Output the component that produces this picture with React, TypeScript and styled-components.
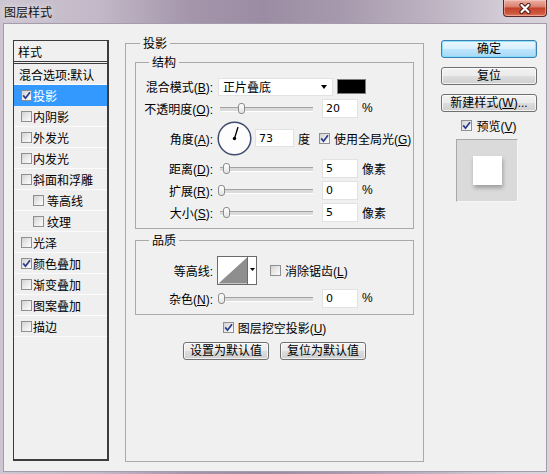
import React from 'react';
import styled, { createGlobalStyle } from 'styled-components';

const FONT = `"Liberation Sans", "Noto Sans CJK SC", sans-serif`;

const GlobalStyle = createGlobalStyle`
  html, body {
    margin: 0;
    padding: 0;
  }
  body {
    width: 550px;
    height: 474px;
    overflow: hidden;
    font-family: ${FONT};
    font-size: 12px;
    color: #000;
  }
  * {
    box-sizing: border-box;
  }
`;

type StyleItem = {
  label: string;
  plain?: boolean;
  checked?: boolean;
  selected?: boolean;
  indent?: boolean;
};

const styleItems: StyleItem[] = [
  { label: '混合选项:默认', plain: true },
  { label: '投影', checked: true, selected: true },
  { label: '内阴影' },
  { label: '外发光' },
  { label: '内发光' },
  { label: '斜面和浮雕' },
  { label: '等高线', indent: true },
  { label: '纹理', indent: true },
  { label: '光泽' },
  { label: '颜色叠加', checked: true },
  { label: '渐变叠加' },
  { label: '图案叠加' },
  { label: '描边' },
];

const Check = ({ checked }: { checked?: boolean }) => (
  <CheckBox>
    {checked && (
      <svg width="9" height="9" viewBox="0 0 9 9">
        <path d="M1.2 4.4 L3.5 7.2 L8 1.2" fill="none" stroke="#27398c" strokeWidth="1.7" />
      </svg>
    )}
  </CheckBox>
);

const Slider = ({ value }: { value: number }) => (
  <Track>
    <Thumb style={{ left: value }} />
  </Track>
);

const Dial = ({ angle }: { angle: number }) => {
  const rad = (angle * Math.PI) / 180;
  const x = 17.5 + 12 * Math.cos(rad);
  const y = 17.5 - 12 * Math.sin(rad);
  return (
    <DialWrap>
      <svg width="35" height="35" viewBox="0 0 35 35">
        <circle cx="17.5" cy="17.5" r="16.3" fill="#fdfdfd" stroke="#3f4c6b" strokeWidth="1.5" />
        <line x1="17.5" y1="17.5" x2={x} y2={y} stroke="#000" strokeWidth="1.3" />
        <circle cx="17.5" cy="17.5" r="1.7" fill="#000" />
      </svg>
    </DialWrap>
  );
};

const ContourPicker = () => (
  <ContourWrap>
    <svg width="40" height="29" viewBox="0 0 40 29">
      <rect x="0.5" y="0.5" width="39" height="28" fill="#fff" stroke="#6a6a6a" />
      <polygon points="1.5,27.5 30,1.5 30,27.5" fill="#8e8e8e" />
      <line x1="30.5" y1="1" x2="30.5" y2="28" stroke="#6a6a6a" />
      <polygon points="33,12 38,12 35.5,15" fill="#000" />
    </svg>
  </ContourWrap>
);

export default function App() {
  return (
    <>
      <GlobalStyle />
      <Window>
        <TitleBar>
          <Title>图层样式</Title>
          <CloseButton aria-label="关闭">
            <svg width="14" height="11" viewBox="0 0 14 11">
              <path d="M3.5 2 L10.5 9 M10.5 2 L3.5 9" stroke="#4b1913" strokeWidth="4.2" strokeLinecap="round" />
              <path d="M3.5 2 L10.5 9 M10.5 2 L3.5 9" stroke="#fff" strokeWidth="2.2" strokeLinecap="round" />
            </svg>
          </CloseButton>
        </TitleBar>

        <Client>
          <StyleList>
            <ListHeader>样式</ListHeader>
            {styleItems.map((item) => (
              <ListItem key={item.label} $selected={item.selected} $plain={item.plain} $indent={item.indent}>
                {!item.plain && <Check checked={item.checked} />}
                <ItemText $indent={item.indent}>{item.label}</ItemText>
              </ListItem>
            ))}
          </StyleList>

          <Group>
            <Legend $offset={14}>投影</Legend>

            <SubGroup $padTop={7} $padBottom={6} $gap={2}>
              <Legend $offset={13}>结构</Legend>
              <Row $h={19}>
                <Label>混合模式(<u>B</u>):</Label>
                <Select>
                  <span>正片叠底</span>
                  <Caret />
                </Select>
                <Swatch />
              </Row>
              <Row $h={20}>
                <Label>不透明度(<u>O</u>):</Label>
                <Slider value={20} />
                <NumBox $w={36}>20</NumBox>
                <Unit>%</Unit>
              </Row>
              <Row $h={36}>
                <Label>角度(<u>A</u>):</Label>
                <Dial angle={73} />
                <NumBox $w={39} $h={18} $ml={3}>73</NumBox>
                <Unit>度</Unit>
                <CheckLine $ml={9}>
                  <Check checked />
                  <span>使用全局光(<u>G</u>)</span>
                </CheckLine>
              </Row>
              <Row $h={20}>
                <Label>距离(<u>D</u>):</Label>
                <Slider value={5} />
                <NumBox $w={36}>5</NumBox>
                <Unit>像素</Unit>
              </Row>
              <Row $h={20}>
                <Label>扩展(<u>R</u>):</Label>
                <Slider value={0} />
                <NumBox $w={36}>0</NumBox>
                <Unit>%</Unit>
              </Row>
              <Row $h={20}>
                <Label>大小(<u>S</u>):</Label>
                <Slider value={5} />
                <NumBox $w={36}>5</NumBox>
                <Unit>像素</Unit>
              </Row>
            </SubGroup>

            <SubGroup $padTop={8} $padBottom={6} $gap={3}>
              <Legend $offset={13}>品质</Legend>
              <Row $h={29}>
                <Label>等高线:</Label>
                <ContourPicker />
                <CheckLine $ml={13}>
                  <Check />
                  <span>消除锯齿(<u>L</u>)</span>
                </CheckLine>
              </Row>
              <Row $h={20}>
                <Label>杂色(<u>N</u>):</Label>
                <Slider value={0} />
                <NumBox $w={36}>0</NumBox>
                <Unit>%</Unit>
              </Row>
            </SubGroup>

            <CenterRow $mt={3}>
              <CheckLine>
                <Check checked />
                <span>图层挖空投影(<u>U</u>)</span>
              </CheckLine>
            </CenterRow>
            <CenterRow $mt={4}>
              <Button $w={86}>设置为默认值</Button>
              <Button $w={86}>复位为默认值</Button>
            </CenterRow>
          </Group>

          <SideColumn>
            <Button $primary>确定</Button>
            <Button>复位</Button>
            <Button>
              新建样式(<u>W</u>)...
            </Button>
            <CenterRow $mt={-4} $h={16}>
              <CheckLine>
                <Check checked />
                <span>预览(<u>V</u>)</span>
              </CheckLine>
            </CenterRow>
            <Preview>
              <PreviewSquare />
            </Preview>
          </SideColumn>
        </Client>
      </Window>
    </>
  );
}

const Window = styled.div`
  width: 550px;
  height: 474px;
  display: flex;
  flex-direction: column;
  background: linear-gradient(
    90deg,
    #cdc5d1 0%,
    #c2b8c7 18%,
    #a596ac 34%,
    #9b8ca3 48%,
    #a799ad 62%,
    #bcb2c1 78%,
    #d3cdd7 92%,
    #d9d4dc 100%
  );
`;

const TitleBar = styled.div`
  height: 23px;
  flex-shrink: 0;
  display: flex;
  justify-content: space-between;
  align-items: flex-start;
  padding: 0 3px 0 4px;
`;

const Title = styled.div`
  line-height: 23px;
  font-family: "Noto Sans CJK SC", sans-serif;
  font-size: 12px;
  color: #101010;
  text-shadow: 0 0 6px rgba(255, 255, 255, 0.9);
`;

const CloseButton = styled.div`
  width: 44px;
  height: 17px;
  display: flex;
  align-items: center;
  justify-content: center;
  border: 1px solid #5c2a26;
  border-top: none;
  border-radius: 0 0 4px 4px;
  background: linear-gradient(#eab0a4 0%, #dc8470 40%, #c4412b 52%, #cf5a40 85%, #e07a5e 100%);
  box-shadow: inset 0 0 0 1px rgba(255, 220, 210, 0.45);
`;

const Client = styled.div`
  flex: 1;
  margin: 0 3px 2px 3px;
  display: flex;
  align-items: flex-start;
  padding: 11px 0 0 9px;
  background: #f0f0f0;
  border: 1px solid #a59cab;
`;

const StyleList = styled.div`
  width: 96px;
  height: 421px;
  margin-top: 5px;
  flex-shrink: 0;
  border: 1px solid #3c3c3c;
  border-right-width: 2px;
  border-bottom-width: 2px;
  background: #f0f0f0;
  display: flex;
  flex-direction: column;
`;

const ListHeader = styled.div`
  height: 23px;
  padding-left: 4px;
  line-height: 21px;
  border-bottom: 3px double #3c3c3c;
  font-family: "Noto Sans CJK SC", sans-serif;
`;

const ListItem = styled.div<{ $selected?: boolean; $plain?: boolean; $indent?: boolean }>`
  height: 21px;
  flex-shrink: 0;
  display: flex;
  align-items: center;
  padding-left: ${(p) => (p.$plain ? 4 : p.$indent ? 19 : 7)}px;
  border-bottom: 1px solid ${(p) => (p.$selected ? '#3399ff' : '#fbfbfb')};
  background: ${(p) => (p.$selected ? '#3399ff' : '#efefef')};
  color: ${(p) => (p.$selected ? '#fff' : '#000')};
  font-family: "Noto Sans CJK SC", sans-serif;
  white-space: nowrap;
`;

const ItemText = styled.span<{ $indent?: boolean }>`
  margin-left: ${(p) => (p.$indent ? 3 : 1)}px;
`;

const CheckBox = styled.span`
  width: 11px;
  height: 11px;
  flex-shrink: 0;
  display: inline-flex;
  align-items: center;
  justify-content: center;
  border: 1px solid #8e8f8f;
  background: linear-gradient(135deg, #d2d2d2 0%, #ececec 55%, #fbfbfb 100%);
`;

const Group = styled.fieldset`
  width: 299px;
  height: 427px;
  margin: 0 0 0 16px;
  padding: 0;
  min-width: 0;
  flex-shrink: 0;
  border: 1px solid #a9a9a9;
  display: flex;
  flex-direction: column;
  align-items: center;
`;

const Legend = styled.legend<{ $offset: number }>`
  margin-left: ${(p) => p.$offset}px;
  padding: 0 3px;
  line-height: 16px;
  font-family: "Noto Sans CJK SC", sans-serif;
`;

const SubGroup = styled.fieldset<{ $padTop: number; $padBottom: number; $gap: number }>`
  width: 279px;
  margin: 3px 0 0 0;
  padding: ${(p) => p.$padTop}px 0 ${(p) => p.$padBottom}px 0;
  min-width: 0;
  border: 1px solid #a9a9a9;
  display: flex;
  flex-direction: column;
  gap: ${(p) => p.$gap}px;
`;

const Row = styled.div<{ $h: number }>`
  height: ${(p) => p.$h}px;
  display: flex;
  align-items: center;
  white-space: nowrap;
`;

const Label = styled.span`
  width: 77px;
  flex-shrink: 0;
  text-align: right;
`;

const Select = styled.div`
  width: 115px;
  height: 18px;
  margin-left: 5px;
  padding: 0 5px 0 4px;
  display: flex;
  align-items: center;
  justify-content: space-between;
  background: #fff;
  border: 1px solid #e2e2e2;
`;

const Caret = styled.span`
  width: 0;
  height: 0;
  border-left: 3.5px solid transparent;
  border-right: 3.5px solid transparent;
  border-top: 4px solid #000;
`;

const Swatch = styled.span`
  width: 29px;
  height: 15px;
  margin-left: 4px;
  background: #000;
  border: 1px solid #7d7d7d;
`;

const Track = styled.div`
  position: relative;
  width: 95px;
  height: 11px;
  margin-left: 5px;
  flex-shrink: 0;

  &::before {
    content: '';
    position: absolute;
    left: 2px;
    right: 0;
    top: 4px;
    height: 3px;
    background: #dadada;
    border-top: 1px solid #a2a2a2;
    border-bottom: 1px solid #fff;
  }
`;

const Thumb = styled.span`
  position: absolute;
  top: 0;
  width: 7px;
  height: 11px;
  border: 1px solid #8c8c8c;
  border-radius: 3px;
  background: linear-gradient(#ffffff, #e3e3e3);
`;

const NumBox = styled.div<{ $w: number; $h?: number; $ml?: number }>`
  width: ${(p) => p.$w}px;
  height: ${(p) => p.$h ?? 19}px;
  margin-left: ${(p) => p.$ml ?? 9}px;
  flex-shrink: 0;
  padding-left: 3px;
  display: flex;
  align-items: center;
  background: #fff;
  border: 1px solid #e2e2e2;
  font-family: "DejaVu Sans", sans-serif;
  font-size: 11px;
`;

const Unit = styled.span`
  margin-left: 4px;
`;

const DialWrap = styled.span`
  width: 35px;
  height: 35px;
  margin-left: 4px;
  display: flex;
`;

const ContourWrap = styled.span`
  width: 40px;
  height: 29px;
  margin-left: 4px;
  display: flex;
`;

const CheckLine = styled.span<{ $ml?: number }>`
  display: inline-flex;
  align-items: center;
  gap: 4px;
  margin-left: ${(p) => p.$ml ?? 0}px;
  white-space: nowrap;
`;

const CenterRow = styled.div<{ $mt: number; $h?: number }>`
  margin-top: ${(p) => p.$mt}px;
  height: ${(p) => p.$h ?? 19}px;
  display: flex;
  align-items: center;
  justify-content: center;
  gap: 11px;
`;

const Button = styled.button<{ $primary?: boolean; $w?: number }>`
  width: ${(p) => (p.$w ? `${p.$w}px` : '100%')};
  height: 18px;
  padding: 0;
  border-radius: 3px;
  border: 1px solid ${(p) => (p.$primary ? '#3c7fb1' : '#707070')};
  background: ${(p) =>
    p.$primary
      ? 'linear-gradient(#eaf6fd 0%, #d9f0fc 50%, #bee6fd 51%, #a7d9f5 100%)'
      : 'linear-gradient(#f2f2f2 0%, #ebebeb 50%, #dddddd 51%, #cfcfcf 100%)'};
  box-shadow: inset 0 0 0 1px ${(p) => (p.$primary ? 'rgba(120, 220, 252, 0.8)' : 'rgba(255, 255, 255, 0.7)')};
  font-family: ${FONT};
  font-size: 12px;
  line-height: 16px;
  color: #000;
  white-space: nowrap;
`;

const SideColumn = styled.div`
  width: 96px;
  margin: 5px 0 0 17px;
  flex-shrink: 0;
  display: flex;
  flex-direction: column;
  align-items: stretch;
  gap: 9px;
`;

const Preview = styled.div`
  width: 62px;
  height: 63px;
  margin: -3px 0 0 15px;
  display: flex;
  align-items: center;
  justify-content: center;
  background: #dadada;
  border-top: 1px solid #a8a8a8;
  border-left: 1px solid #a8a8a8;
  border-right: 1px solid #f6f6f6;
  border-bottom: 1px solid #f6f6f6;
`;

const PreviewSquare = styled.div`
  width: 29px;
  height: 29px;
  background: #fff;
  box-shadow: 1px 3px 4px rgba(0, 0, 0, 0.28);
`;
